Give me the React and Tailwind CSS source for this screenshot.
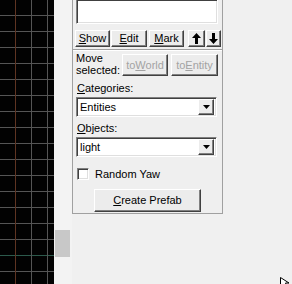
import React from "react";

const raised =
  "border border-t-white border-l-white border-r-[#404040] border-b-[#404040] shadow-[inset_-1px_-1px_#808080] bg-[#ececec]";
const sunken =
  "border border-t-[#808080] border-l-[#808080] border-r-white border-b-white shadow-[inset_1px_1px_#404040,inset_-1px_-1px_#dfdfdf] bg-white";

function Grid() {
  const rows = [];
  for (let y = 15; y < 284; y += 16) rows.push(y);
  return (
    <svg width="54" height="284" className="block shrink-0">
      <rect width="54" height="284" fill="#020202" />
      {rows.map(y => (
        <line key={y} x1="0" x2="54" y1={y + 0.5} y2={y + 0.5} stroke={y === 255 ? "#2c5a4c" : "#555555"} strokeWidth="1" />
      ))}
      <line x1="31.5" x2="31.5" y1="0" y2="284" stroke="#555555" />
      <line x1="47.5" x2="47.5" y1="0" y2="284" stroke="#555555" />
      <line x1="15.5" x2="15.5" y1="0" y2="284" stroke="#5e3422" />
    </svg>
  );
}

function Combo({ value }) {
  return (
    <div className={`ml-[3px] w-[141px] h-[20px] flex items-center ${sunken} p-[2px]`}>
      <span className="flex-1 pl-[1px] leading-[14px]">{value}</span>
      <div className={`w-[16px] h-[16px] flex items-center justify-center ${raised}`}>
        <svg width="7" height="4"><polygon points="0,0 7,0 3.5,4" fill="#000" /></svg>
      </div>
    </div>
  );
}

function Arrow({ down }) {
  return (
    <svg width="9" height="11" viewBox="0 0 9 11" className={down ? "rotate-180" : ""}>
      <polygon points="4.5,0 9,5 6,5 6,11 3,11 3,5 0,5" fill="#000" />
    </svg>
  );
}

export default function App() {
  return (
    <div
      className="w-[292px] h-[284px] overflow-hidden relative flex bg-[#f0f0f0] text-[11px] text-black"
      style={{ fontFamily: '"Liberation Sans", Arial, sans-serif' }}
    >
      <Grid />
      <div className="w-[18px] shrink-0 bg-[#f3f3f3] pt-[230px] pl-[1px]">
        <div className="w-[15px] h-[27px] bg-[#c8c8c8]" />
      </div>
      <div className="w-[151px] h-[214px] shrink-0 flex flex-col border-l border-r border-b border-[#a0a0a0] bg-[#efefef]">
        <div className={`ml-[3px] w-[142px] h-[24px] ${sunken} border-t-0`} />
        <div className="mt-[6px] h-[17px] flex ml-[2px] leading-[15px]">
          <button className={`w-[35px] ${raised}`}><span className="underline">S</span>how</button>
          <button className={`ml-[1px] w-[36px] ${raised}`}><span className="underline">E</span>dit</button>
          <button className={`ml-[2px] w-[35px] ${raised}`}><span className="underline">M</span>ark</button>
          <button className={`ml-[4px] w-[17px] flex items-center justify-center ${raised}`}><Arrow /></button>
          <button className={`ml-[1px] w-[15px] flex items-center justify-center ${raised}`}><Arrow down /></button>
        </div>
        <div className="mt-[2px] h-[1px] bg-[#a0a0a0]" />
        <div className="h-[1px] bg-white" />
        <div className="flex items-start h-[25px]">
          <div className="ml-[3px] w-[46px] pt-[1px] leading-[12px]">Move<br />selected:</div>
          <button className={`mt-[3px] w-[46px] h-[22px] text-[#a3a3a3] ${raised}`}>to<span className="underline">W</span>orld</button>
          <button className={`mt-[3px] ml-[3px] w-[47px] h-[22px] text-[#a3a3a3] ${raised}`}>to<span className="underline">E</span>ntity</button>
        </div>
        <div className="mt-[6px] ml-[4px] leading-[12px]"><span className="underline">C</span>ategories:</div>
        <div className="mt-[3px]"><Combo value="Entities" /></div>
        <div className="mt-[5px] ml-[4px] leading-[12px]"><span className="underline">O</span>bjects:</div>
        <div className="mt-[3px]"><Combo value="light" /></div>
        <div className="mt-[11px] ml-[4px] h-[12px] flex items-center">
          <div className={`w-[12px] h-[12px] ${sunken}`} />
          <span className="ml-[6px] leading-[12px]">Random Yaw</span>
        </div>
        <div className="mt-[9px] ml-[21px]">
          <button className={`w-[107px] h-[23px] ${raised}`}><span className="underline">C</span>reate Prefab</button>
        </div>
      </div>
      <svg width="12" height="10" className="absolute left-[280px] top-[277px]">
        <polygon points="0.5,0.5 0.5,9.5 3,7 5,10 7,9 5.5,6 9,6" fill="#fff" stroke="#000" strokeWidth="1" />
      </svg>
    </div>
  );
}
